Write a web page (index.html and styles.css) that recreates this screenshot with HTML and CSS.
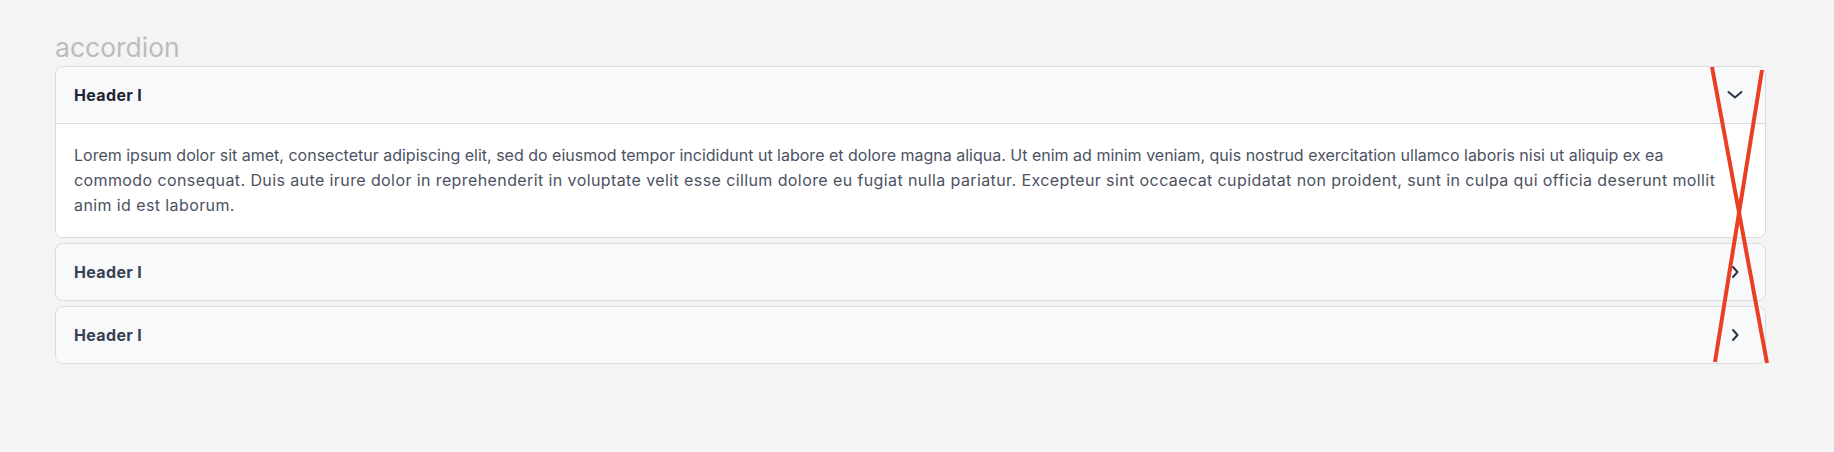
FILE: index.html
```html
<!DOCTYPE html>
<html lang="en">
<head>
<meta charset="utf-8">
<title>accordion</title>
<link rel="stylesheet" href="styles.css">
</head>
<body>
<main class="page">
  <h1 class="title">accordion</h1>
  <div class="accordion">
    <section class="item open">
      <div class="item-header">
        <span class="item-title">Header I</span>
        <svg class="chevron" width="20" height="20" viewBox="0 0 20 20" fill="none" stroke="#2d3444" stroke-width="2" stroke-linecap="round" stroke-linejoin="round"><path d="M3.5 7 10 12.5 16.5 7"/></svg>
      </div>
      <div class="item-body">Lorem ipsum dolor sit amet, consectetur adipiscing elit, sed do eiusmod tempor incididunt ut labore et dolore magna aliqua. Ut enim ad minim veniam, quis nostrud exercitation ullamco laboris nisi ut aliquip ex ea<br><span class="wide">commodo consequat. Duis aute irure dolor in reprehenderit in voluptate velit esse cillum dolore eu fugiat nulla pariatur. Excepteur sint occaecat cupidatat non proident, sunt in culpa qui officia deserunt mollit<br>anim id est laborum.</span></div>
    </section>
    <section class="item">
      <div class="item-header">
        <span class="item-title">Header I</span>
        <svg class="chevron" width="20" height="20" viewBox="0 0 20 20" fill="none" stroke="#2d3444" stroke-width="2" stroke-linecap="round" stroke-linejoin="round"><path d="M8 5 12.5 10 8 15"/></svg>
      </div>
    </section>
    <section class="item">
      <div class="item-header">
        <span class="item-title">Header I</span>
        <svg class="chevron" width="20" height="20" viewBox="0 0 20 20" fill="none" stroke="#2d3444" stroke-width="2" stroke-linecap="round" stroke-linejoin="round"><path d="M8 5 12.5 10 8 15"/></svg>
      </div>
    </section>
  </div>
  <svg class="cross" width="1834" height="452" viewBox="0 0 1834 452" fill="none" stroke="#ea3f22" stroke-width="4">
    <line x1="1712" y1="67" x2="1767" y2="363"/>
    <line x1="1762" y1="70" x2="1715" y2="362"/>
  </svg>
</main>
</body>
</html>
```

FILE: styles.css
```css
* { box-sizing: border-box; }
html, body {
  margin: 0;
  padding: 0;
  background: #f4f4f4;
}
body {
  font-family: Inter, "Noto Sans", "Liberation Sans", sans-serif;
  color: #1f2533;
}
.page {
  position: relative;
  width: 1834px;
  height: 452px;
  padding: 31px 68px 0 55px;
}
.title {
  margin: 0 0 3px 0;
  font-size: 26.5px;
  line-height: 32px;
  font-weight: 400;
  color: #bcbcbc;
}
.accordion {
  display: flex;
  flex-direction: column;
  gap: 5px;
}
.item {
  border: 1px solid #d9dbe0;
  border-radius: 8px;
  background: #f8f9fb;
  overflow: hidden;
}
.item-header {
  display: flex;
  align-items: center;
  justify-content: space-between;
  height: 56px;
  padding: 0 20px 0 18px;
  background: #f8f9fb;
}
.item-title {
  font-size: 16px;
  line-height: 24px;
  font-weight: 700;
  letter-spacing: 0.35px;
  color: #374151;
}
.open .item-title { color: #1f2533; }
.open .item-header {
  border-bottom: 1px solid #d9dbe0;
  height: 57px;
}
.item-body {
  background: #ffffff;
  padding: 19px 18px 19px 18px;
  font-size: 16px;
  line-height: 25px;
  color: #4b5262;
  white-space: nowrap;
}
.wide { letter-spacing: 0.4px; }
.chevron { display: block; }
.cross {
  position: absolute;
  left: 0;
  top: 0;
  pointer-events: none;
}
```
